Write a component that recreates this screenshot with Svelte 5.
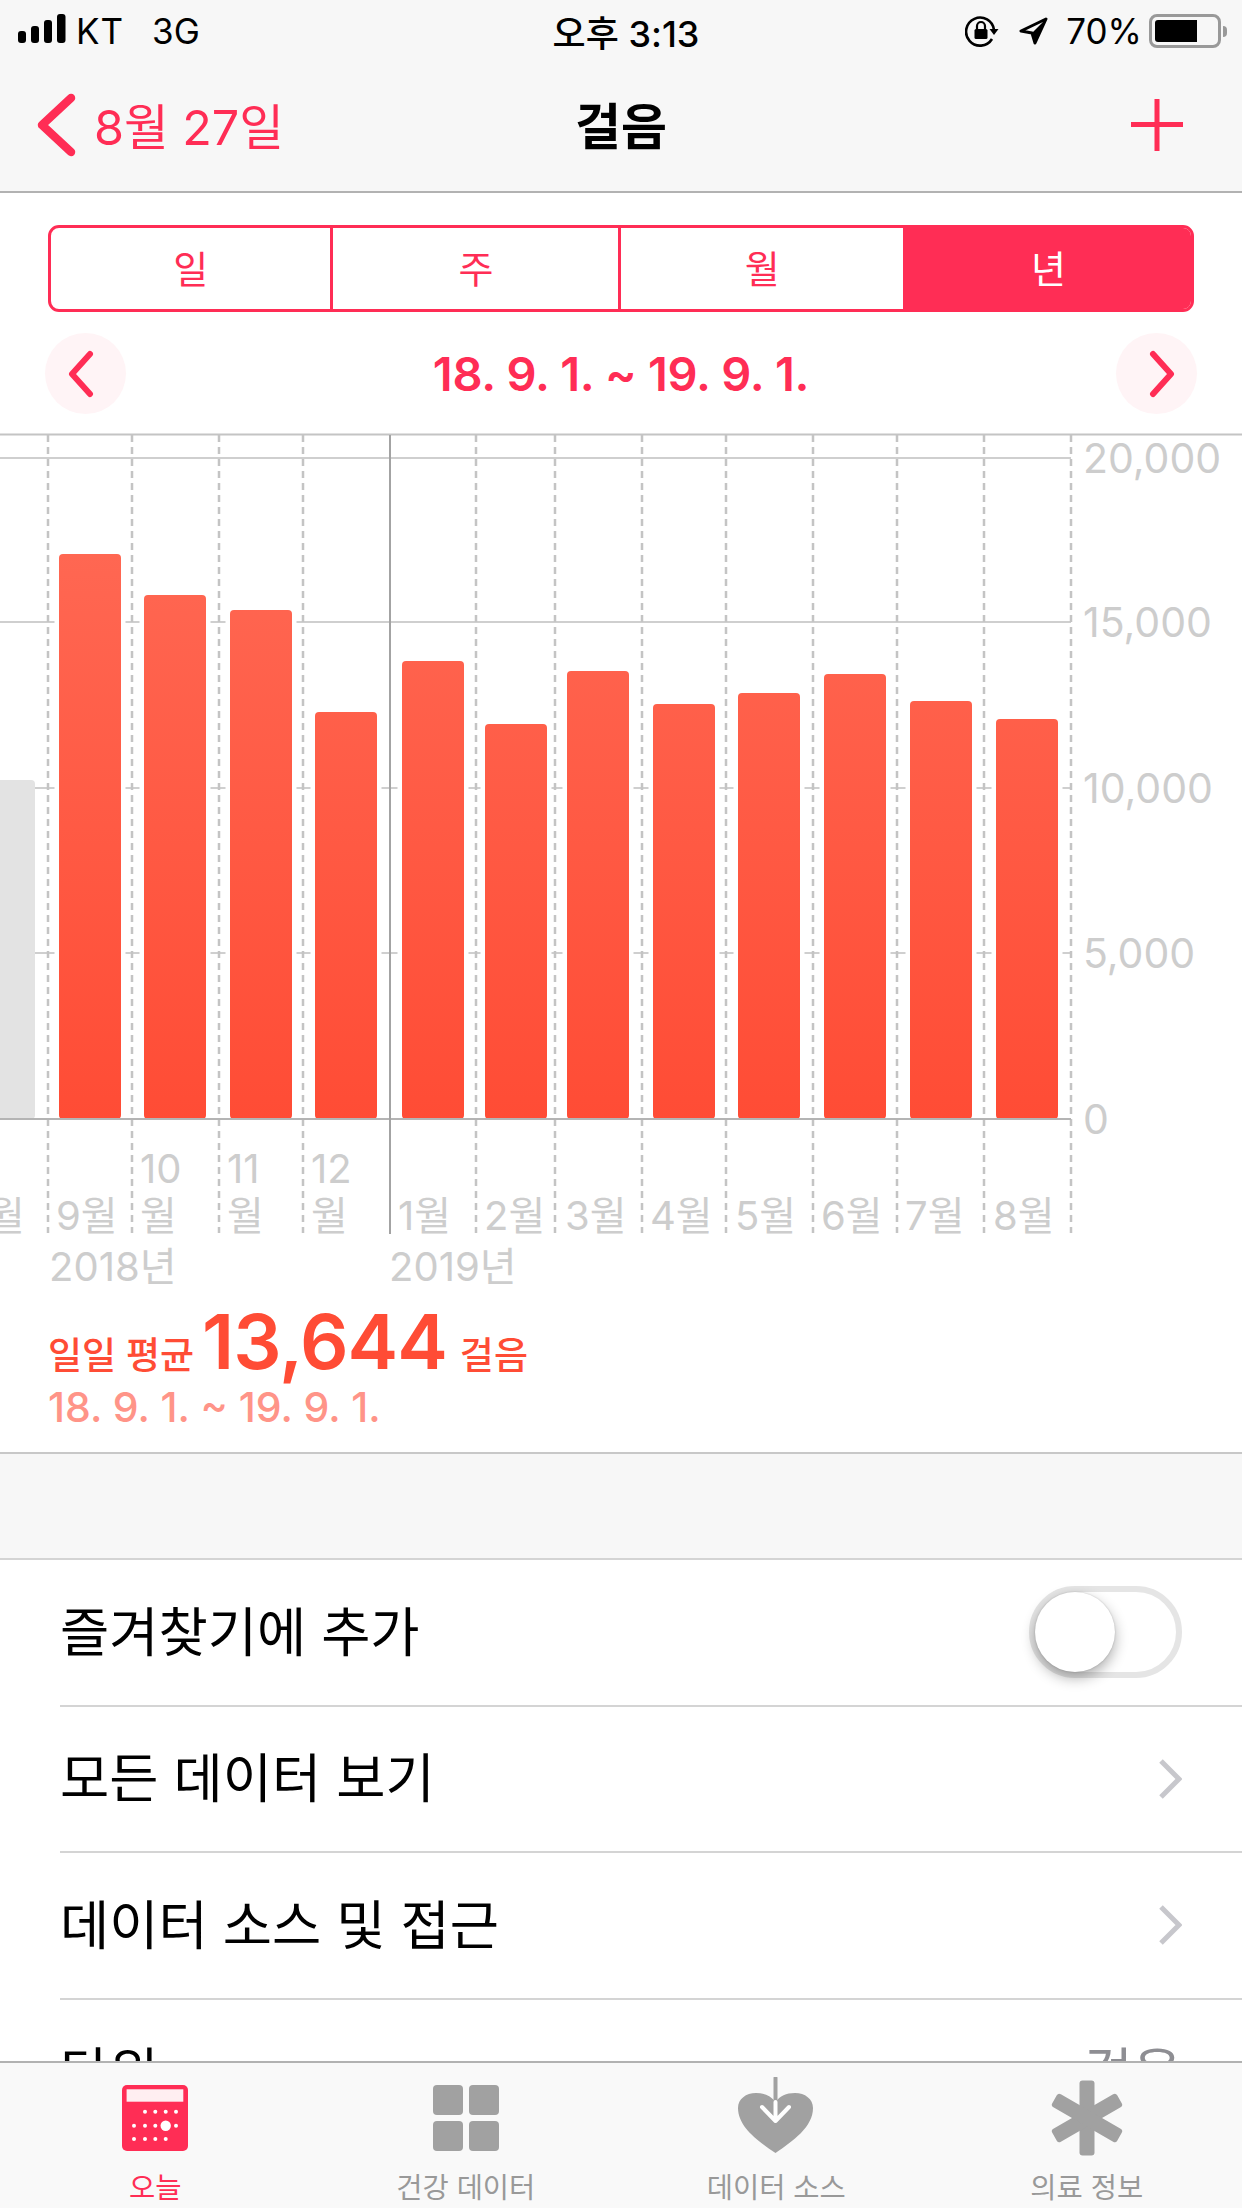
<script>
  const bars = [
    { x: 59, w: 62, top: 554 },
    { x: 144, w: 62, top: 595 },
    { x: 230, w: 62, top: 610 },
    { x: 315, w: 62, top: 712 },
    { x: 402, w: 62, top: 661 },
    { x: 485, w: 62, top: 724 },
    { x: 567, w: 62, top: 671 },
    { x: 653, w: 62, top: 704 },
    { x: 738, w: 62, top: 693 },
    { x: 824, w: 62, top: 674 },
    { x: 910, w: 62, top: 701 },
    { x: 996, w: 62, top: 719 }
  ];
  const dashed = [48, 132, 219, 303, 476, 555, 642, 726, 813, 897, 984, 1071];
  const grid = [
    { y: 458, label: '20,000' },
    { y: 622, label: '15,000' },
    { y: 788, label: '10,000' },
    { y: 953, label: '5,000' },
    { y: 1119, label: '0' }
  ];
  const months = [
    { x: -12, t: '월' },
    { x: 56, t: '9월' },
    { x: 398, t: '1월' },
    { x: 484, t: '2월' },
    { x: 565, t: '3월' },
    { x: 650, t: '4월' },
    { x: 735, t: '5월' },
    { x: 821, t: '6월' },
    { x: 905, t: '7월' },
    { x: 993, t: '8월' }
  ];
  const stacked = [
    { x: 140, t: '10' },
    { x: 227, t: '11' },
    { x: 311, t: '12' }
  ];
  const segments = ['일', '주', '월', '년'];
  const dots = [
    [23, 26.7], [33.3, 26.7], [43.7, 26.7], [54, 26.7],
    [12, 40.7], [23, 40.7], [33.3, 40.7], [54, 40.7],
    [12, 54], [23, 54], [33.3, 54], [43.7, 54]
  ];
</script>

<div class="page">
  <header class="top">
    <div class="status">
      <div class="status-left">
        <svg class="signal" width="48" height="34" viewBox="0 0 48 34">
          <rect x="0" y="18" width="8" height="12" rx="3" />
          <rect x="13" y="13" width="8" height="17" rx="3" />
          <rect x="26" y="7" width="8" height="23" rx="3" />
          <rect x="39" y="1" width="8.5" height="29" rx="3" />
        </svg>
        <span class="carrier">KT</span>
        <span class="net">3G</span>
      </div>
      <div class="time">오후 3:13</div>
      <div class="status-right">
        <svg width="34" height="32" viewBox="0 0 34 32" fill="none">
          <path d="M27 24a14 14 0 1 1 2-9" stroke="#000" stroke-width="2.6" />
          <path d="M24.5 14h9L29 20z" fill="#000" />
          <rect x="9.5" y="14" width="13" height="10" rx="1.5" fill="#000" />
          <path d="M12 14v-3a4 4 0 0 1 8 0v3" stroke="#000" stroke-width="2.2" />
        </svg>
        <svg class="loc" width="30" height="28" viewBox="0 0 30 28" fill="none">
          <path d="M27 2 2 14l11 2 3 10z" stroke="#000" stroke-width="3" stroke-linejoin="round" />
          <path d="M27 2 13 16l3 10z" fill="#000" />
        </svg>
        <span class="pct">70%</span>
        <div class="battery"><div class="battery-fill"></div></div>
        <div class="battery-nub"></div>
      </div>
    </div>
    <nav class="nav">
      <div class="back">
        <svg width="52" height="72" viewBox="0 0 52 72" fill="none">
          <path d="M39 9 10 36l29 27" stroke="#ff2d55" stroke-width="8.5" stroke-linecap="round" stroke-linejoin="round" />
        </svg>
        <span>8월 27일</span>
      </div>
      <div class="title">걸음</div>
      <svg class="plus" width="52" height="52" viewBox="0 0 52 52">
        <rect x="0" y="23" width="52" height="5" fill="#ff2d55" />
        <rect x="23.5" y="0" width="5" height="52" fill="#ff2d55" />
      </svg>
    </nav>
  </header>

  <main class="content">
    <section class="range">
      <div class="segment">
        {#each segments as s, i}
          <div class="seg" class:active={i === 3}>{s}</div>
        {/each}
      </div>
      <div class="pager">
        <div class="round">
          <svg width="38" height="48" viewBox="0 0 38 48" fill="none">
            <path d="M23 4 5 24l18 20" stroke="#ff2d55" stroke-width="6" stroke-linecap="round" stroke-linejoin="round" />
          </svg>
        </div>
        <div class="dates">18. 9. 1. ~ 19. 9. 1.</div>
        <div class="round">
          <svg width="38" height="48" viewBox="0 0 38 48" fill="none">
            <path d="M15 4l18 20-18 20" stroke="#ff2d55" stroke-width="6" stroke-linecap="round" stroke-linejoin="round" />
          </svg>
        </div>
      </div>
    </section>

    <svg class="chart" width="1242" height="860" viewBox="0 433 1242 860">
      <defs>
        <linearGradient id="barfill" gradientUnits="userSpaceOnUse" x1="0" y1="554" x2="0" y2="1119">
          <stop offset="0" stop-color="#ff6752" />
          <stop offset="1" stop-color="#ff4c35" />
        </linearGradient>
      </defs>
      <rect x="0" y="433.5" width="1242" height="2" fill="#c4c4c4" />
      {#each grid.slice(0, 4) as g}
        <rect x="0" y={g.y - 1} width="1071" height="2" fill="#cfcfcf" />
      {/each}
      {#each dashed as x}
        <line x1={x} x2={x} y1="435" y2="1233" stroke="#c4c4c4" stroke-width="2.500" stroke-dasharray="7 5" />
      {/each}
      <rect x="-10" y="780" width="45" height="339" rx="4" fill="#e3e3e3" />
      {#each bars as b}
        <rect class="bar" x={b.x} y={b.top} width={b.w} height={1119 - b.top} rx="4" />
      {/each}
      <rect x="0" y="1118" width="1071" height="2" fill="#b4b4b4" />
      <rect x="389" y="435" width="2" height="799" fill="#a3a3a3" />
      {#each grid as g}
        <text class="axis ylabel" x="1083" y={g.y + 15}>{g.label}</text>
      {/each}
      {#each months as m}
        <text class="axis" x={m.x} y="1230">{m.t}</text>
      {/each}
      {#each stacked as m}
        <text class="axis" x={m.x} y="1183">{m.t}</text>
        <text class="axis" x={m.x} y="1230">월</text>
      {/each}
      <text class="axis" x="49" y="1281">2018년</text>
      <text class="axis" x="389" y="1281">2019년</text>
    </svg>

    <section class="stats">
      <div class="avg">
        <span class="small">일일 평균</span>
        <span class="big">13,644</span>
        <span class="small">걸음</span>
      </div>
      <div class="sub">18. 9. 1. ~ 19. 9. 1.</div>
    </section>

    <div class="gap"></div>

    <section class="list">
      <div class="row">
        <div class="row-inner">
          <span>즐겨찾기에 추가</span>
          <div class="toggle"><div class="knob"></div></div>
        </div>
      </div>
      <div class="row">
        <div class="row-inner">
          <span>모든 데이터 보기</span>
          <svg width="24" height="40" viewBox="0 0 24 40" fill="none">
            <path d="M3 2l18 18L3 38" stroke="#c7c7cc" stroke-width="5" />
          </svg>
        </div>
      </div>
      <div class="row">
        <div class="row-inner">
          <span>데이터 소스 및 접근</span>
          <svg width="24" height="40" viewBox="0 0 24 40" fill="none">
            <path d="M3 2l18 18L3 38" stroke="#c7c7cc" stroke-width="5" />
          </svg>
        </div>
      </div>
      <div class="row">
        <div class="row-inner">
          <span>단위</span>
          <span class="value">걸음</span>
        </div>
      </div>
    </section>
  </main>

  <footer class="tabs">
    <div class="tab active">
      <svg width="66" height="66" viewBox="0 0 66 66">
        <rect width="66" height="66" rx="5" fill="#ff2d55" />
        <rect x="4.6" y="4.3" width="56.7" height="12.4" fill="#fff" fill-opacity=".92" />
        {#each dots as d}
          <circle cx={d[0]} cy={d[1]} r="2" fill="#fff" />
        {/each}
        <circle cx="43.7" cy="40.7" r="5.2" fill="#fff" />
      </svg>
      <span>오늘</span>
    </div>
    <div class="tab">
      <svg width="66" height="66" viewBox="0 0 66 66" fill="#a1a1a1">
        <rect width="30" height="30" rx="4" />
        <rect x="36" width="30" height="30" rx="4" />
        <rect y="36" width="30" height="30" rx="4" />
        <rect x="36" y="36" width="30" height="30" rx="4" />
      </svg>
      <span>건강 데이터</span>
    </div>
    <div class="tab">
      <svg class="heart" width="76" height="76" viewBox="0 0 76 76" fill="none">
        <path d="M37.5 76C20 64 0 50 0 31 0 22 8 16 18 16c9 0 15 3 19.500 9C42 19 48 16 57 16c10 0 18 6 18 15 0 19-20 33-37.500 45z" fill="#a1a1a1" />
        <path d="M37.500 1v24" stroke="#a1a1a1" stroke-width="4" stroke-linecap="round" />
        <path d="M37.500 25v19M24 30l13.500 14L51 30" stroke="#fff" stroke-width="4" stroke-linecap="round" stroke-linejoin="round" />
      </svg>
      <span>데이터 소스</span>
    </div>
    <div class="tab">
      <svg class="star" width="72" height="76" viewBox="-36 -38 72 76" fill="#a1a1a1">
        <rect x="-7.500" y="-37.500" width="15" height="75" rx="3" />
        <rect x="-7.500" y="-37.500" width="15" height="75" rx="3" transform="rotate(60)" />
        <rect x="-7.500" y="-37.500" width="15" height="75" rx="3" transform="rotate(-60)" />
      </svg>
      <span>의료 정보</span>
    </div>
  </footer>
</div>

<style>
  :global(body) {
    margin: 0;
    background: #fff;
    overflow: hidden;
  }

  .page {
    width: 1242px;
    height: 2208px;
    display: flex;
    flex-direction: column;
    overflow: hidden;
    font-family: Inter, "Noto Sans CJK KR", sans-serif;
    color: #000;
  }

  .top {
    height: 191px;
    flex: none;
    background: #f7f7f7;
    border-bottom: 2px solid #b2b2b2;
  }

  .status {
    height: 62px;
    display: grid;
    grid-template-columns: 1fr auto 1fr;
    align-items: center;
    font-size: 35px;
  }

  .status-left {
    display: flex;
    align-items: center;
    padding-left: 18px;
  }

  .signal {
    fill: #000;
    margin-top: -2px;
  }

  .carrier {
    margin-left: 10px;
    letter-spacing: 1px;
  }

  .net {
    margin-left: 28px;
  }

  .time {
    font-weight: 500;
    font-size: 36px;
    padding-left: 10px;
  }

  .status-right {
    display: flex;
    align-items: center;
    justify-content: flex-end;
    padding-right: 15px;
  }

  .loc {
    margin-left: 20px;
  }

  .pct {
    margin-left: 17px;
  }

  .battery {
    margin-left: 7px;
    width: 72px;
    height: 34px;
    box-sizing: border-box;
    border: 3px solid #999;
    border-radius: 8px;
    padding: 3px;
  }

  .battery-fill {
    width: 42px;
    height: 22px;
    background: #000;
    border-radius: 3px 0 0 3px;
  }

  .battery-nub {
    width: 4px;
    height: 11px;
    margin-left: 2px;
    background: #999;
    border-radius: 0 4px 4px 0;
  }

  .nav {
    height: 129px;
    box-sizing: border-box;
    display: grid;
    grid-template-columns: 1fr auto 1fr;
    align-items: center;
    padding: 0 59px 3px;
  }

  .back {
    display: flex;
    align-items: center;
    color: #ff2d55;
    font-size: 48.500px;
    margin-left: -27px;
  }

  .back span {
    margin-left: 10px;
    padding-bottom: 3px;
  }

  .title {
    font-size: 50px;
    font-weight: 600;
    padding-bottom: 5px;
  }

  .plus {
    justify-self: end;
  }

  .content {
    flex: 1;
    min-height: 0;
    overflow: hidden;
    background: #fff;
  }

  .range {
    height: 240px;
    box-sizing: border-box;
    padding: 32px 45px 0 45px;
  }

  .segment {
    display: grid;
    grid-template-columns: 279fr 288fr 284fr 288fr;
    margin: 0 3px;
    height: 87px;
    box-sizing: border-box;
    border: 3px solid #ff2d55;
    border-radius: 11px;
    overflow: hidden;
    color: #ff2d55;
    font-size: 38px;
  }

  .seg {
    display: flex;
    align-items: center;
    justify-content: center;
    border-left: 3px solid #ff2d55;
    padding-bottom: 4px;
  }

  .seg:first-child {
    border-left: 0;
  }

  .seg.active {
    background: #ff2d55;
    color: #fff;
  }

  .pager {
    display: flex;
    align-items: center;
    justify-content: space-between;
    margin-top: 21px;
  }

  .round {
    width: 81px;
    height: 81px;
    border-radius: 50%;
    background: #fff4f6;
    display: flex;
    align-items: center;
    justify-content: center;
  }

  .dates {
    color: #ff2d55;
    font-size: 47px;
    font-weight: 600;
    letter-spacing: -.3px;
  }

  .chart {
    display: block;
  }

  .bar {
    fill: url(#barfill);
    stroke: #fff;
    stroke-width: 9;
    paint-order: stroke;
  }

  .axis {
    fill: #cdcdcd;
    font-size: 40px;
  }

  .ylabel {
    font-size: 41px;
  }

  .stats {
    height: 161px;
    box-sizing: border-box;
    border-bottom: 2px solid #c8c8c8;
    padding: 8px 0 0 48px;
  }

  .avg {
    display: flex;
    align-items: baseline;
    color: #ff4c35;
    height: 81px;
    line-height: 81px;
  }

  .small {
    font-size: 37px;
    font-weight: 500;
    padding-top: 3px;
  }

  .big {
    font-size: 76px;
    font-weight: 600;
    letter-spacing: -1px;
    margin: 0 13px 0 8px;
  }

  .sub {
    color: #ff9488;
    font-size: 41px;
    font-weight: 500;
    line-height: 50px;
  }

  .gap {
    height: 104px;
    background: #f7f7f7;
    border-bottom: 2px solid #d4d4d4;
  }

  .row {
    height: 146.500px;
    padding-left: 60px;
    box-sizing: border-box;
    font-size: 53.500px;
  }

  .row-inner {
    height: 100%;
    box-sizing: border-box;
    padding-right: 60px;
    display: flex;
    align-items: center;
    justify-content: space-between;
    border-bottom: 2px solid #d4d4d4;
  }

  .row-inner span {
    padding-bottom: 8px;
  }

  .row:last-child .row-inner {
    border-bottom: 0;
  }

  .value {
    color: #8e8e93;
  }

  .toggle {
    width: 153px;
    height: 92px;
    box-sizing: border-box;
    border: 6px solid #e5e5e5;
    border-radius: 46px;
    background: #fff;
  }

  .knob {
    width: 80px;
    height: 80px;
    border-radius: 50%;
    background: #fff;
    box-shadow: 0 6px 14px rgba(0, 0, 0, .32), 0 0 2px rgba(0, 0, 0, .2);
  }

  .tabs {
    height: 145px;
    flex: none;
    display: grid;
    grid-template-columns: repeat(4, 1fr);
    background: #f9f9f9;
    border-top: 2px solid #b2b2b2;
    color: #999;
    font-size: 28.500px;
  }

  .tab {
    display: flex;
    flex-direction: column;
    align-items: center;
    padding-top: 22px;
    box-sizing: border-box;
  }

  .tab span {
    margin-top: 15px;
    line-height: 44px;
  }

  .tab.active {
    color: #ff2d55;
  }

  .heart {
    margin-top: -8px;
    margin-bottom: -2px;
  }

  .star {
    margin-top: -5px;
    margin-bottom: -5px;
  }
</style>
